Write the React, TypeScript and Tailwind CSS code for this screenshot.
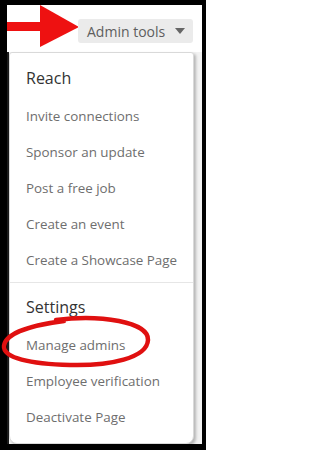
const reach = [
  "Invite connections",
  "Sponsor an update",
  "Post a free job",
  "Create an event",
  "Create a Showcase Page",
];

const settings = ["Manage admins", "Employee verification", "Deactivate Page"];

const font = { fontFamily: '"Open Sans", "Liberation Sans", sans-serif' };

const App = () => {
  return (
    <div
      className="relative w-[206px] h-[450px] bg-black pt-[5px] pl-[7px] pr-[4px] pb-[6px] flex flex-col"
      style={font}
    >
      {/* top bar with arrow + button */}
      <div className="flex items-start h-[47px] bg-white">
        <svg width="72" height="42" viewBox="0 0 72 42" className="shrink-0">
          <rect x="0" y="17" width="36" height="9" fill="#ee1111" />
          <polygon points="33,0 33,42 72,22" fill="#ee1111" />
        </svg>
        <button className="mt-[14px] -ml-[1px] w-[115px] h-[24px] rounded-[3px] bg-[#ebebeb] flex items-center pl-[9px] pr-[8px] text-[14px] text-[#5e5e5e]">
          <span>Admin tools</span>
          <svg width="10" height="6" viewBox="0 0 10 6" className="ml-auto">
            <polygon points="0,0 10,0 5,6" fill="#666" />
          </svg>
        </button>
      </div>

      <div className="flex flex-1 bg-[#f2f2f2]">
        <div className="w-[2px] bg-[#1c1c1c]" />
        <div className="w-[185px] bg-white border border-[#d9d9d9] rounded-t-[3px] rounded-b-[8px] shadow-[2px_2px_3px_rgba(0,0,0,0.25)] flex flex-col">
          <div className="pt-[4px] pb-[4px] border-b border-[#e6e6e6]">
            <div className="h-[41px] flex items-center pl-[16px] text-[16px] text-[#333]">
              Reach
            </div>
            {reach.map((item) => (
              <div
                key={item}
                className="h-[36px] flex items-center pl-[16px] text-[13.4px] text-[#6e6e6e]"
              >
                {item}
              </div>
            ))}
          </div>
          <div className="pt-[4px]">
            <div className="h-[40px] flex items-center pl-[16px] text-[16px] text-[#333]">
              Settings
            </div>
            {settings.map((item) => (
              <div
                key={item}
                className="h-[36px] flex items-center pl-[16px] text-[13.4px] text-[#6e6e6e]"
              >
                {item}
              </div>
            ))}
          </div>
        </div>
      </div>

      {/* hand drawn red circle round "Manage admins" */}
      <svg
        width="206"
        height="450"
        viewBox="0 0 206 450"
        className="absolute left-0 top-0 pointer-events-none"
      >
        <path
          d="M 56 320 C 100 314, 149 322, 148 340 C 147 358, 110 366, 70 365 C 30 364, 3 358, 4 346 C 5 335, 25 326, 64 321"
          fill="none"
          stroke="#e01010"
          strokeWidth="4.5"
          strokeLinecap="round"
        />
      </svg>
    </div>
  );
};

export default App;
